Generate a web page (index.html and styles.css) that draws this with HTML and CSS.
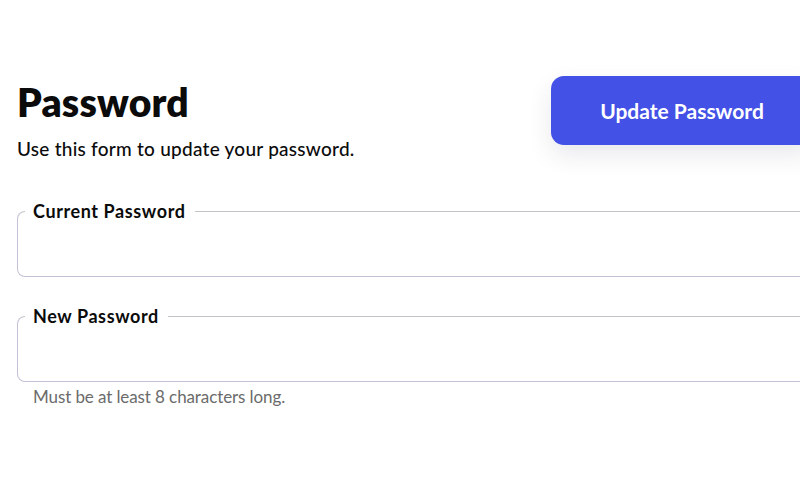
FILE: index.html
```html
<!DOCTYPE html>
<html lang="en">
<head>
<meta charset="utf-8">
<title>Password</title>
<link rel="stylesheet" href="styles.css">
</head>
<body>
<main class="page">
  <header class="header">
    <div class="intro">
      <h1 class="title">Password</h1>
      <p class="subtitle">Use this form to update your password.</p>
    </div>
    <button class="btn-primary" type="button">Update Password</button>
  </header>
  <form class="form">
    <fieldset class="field">
      <legend class="field-label">Current Password</legend>
      <input class="field-input" type="password">
    </fieldset>
    <fieldset class="field">
      <legend class="field-label">New Password</legend>
      <input class="field-input" type="password">
    </fieldset>
    <p class="hint">Must be at least 8 characters long.</p>
  </form>
</main>
</body>
</html>
```

FILE: styles.css
```css
html, body {
  margin: 0;
  padding: 0;
  background: #ffffff;
  overflow: hidden;
}
body {
  font-family: "Lato", "Noto Sans", sans-serif;
  color: #0b0b0b;
  width: 800px;
  height: 500px;
}
.page {
  width: 796px;
  padding: 76px 0 0 17px;
}
.header {
  display: flex;
  justify-content: space-between;
  align-items: flex-start;
}
.title {
  margin: 4px 0 0 0;
  font-size: 39px;
  line-height: 44px;
  font-weight: 800;
  letter-spacing: 0.2px;
}
.subtitle {
  margin: 14px 0 0 0;
  font-size: 19px;
  line-height: 22px;
  font-weight: 500;
  letter-spacing: 0.25px;
}
.btn-primary {
  width: 262px;
  height: 69px;
  border: none;
  border-radius: 13px;
  background: #4351e6;
  color: #ffffff;
  font-family: inherit;
  font-size: 21px;
  font-weight: 700;
  box-shadow: 0 10px 24px rgba(40, 40, 80, 0.10);
}
.form {
  margin-top: 40px;
  display: flex;
  flex-direction: column;
}
.field {
  margin: 0 0 28px 0;
  padding: 0 7px;
  border: 1px solid #c2c1d6;
  border-top-color: #c4c4c8;
  border-radius: 8px;
  height: 77px;
  box-sizing: border-box;
}
.field + .field {
  margin-bottom: 0;
}
.field-label {
  padding: 0 9px 0 8px;
  font-size: 18px;
  line-height: 22px;
  font-weight: 700;
  letter-spacing: 0.6px;
}
.field-input {
  display: block;
  width: 100%;
  height: 44px;
  border: none;
  outline: none;
  background: transparent;
  font-size: 16px;
}
.hint {
  margin: 5px 0 0 16px;
  font-size: 17px;
  line-height: 20px;
  color: #6b6b6b;
  letter-spacing: -0.1px;
}
```
